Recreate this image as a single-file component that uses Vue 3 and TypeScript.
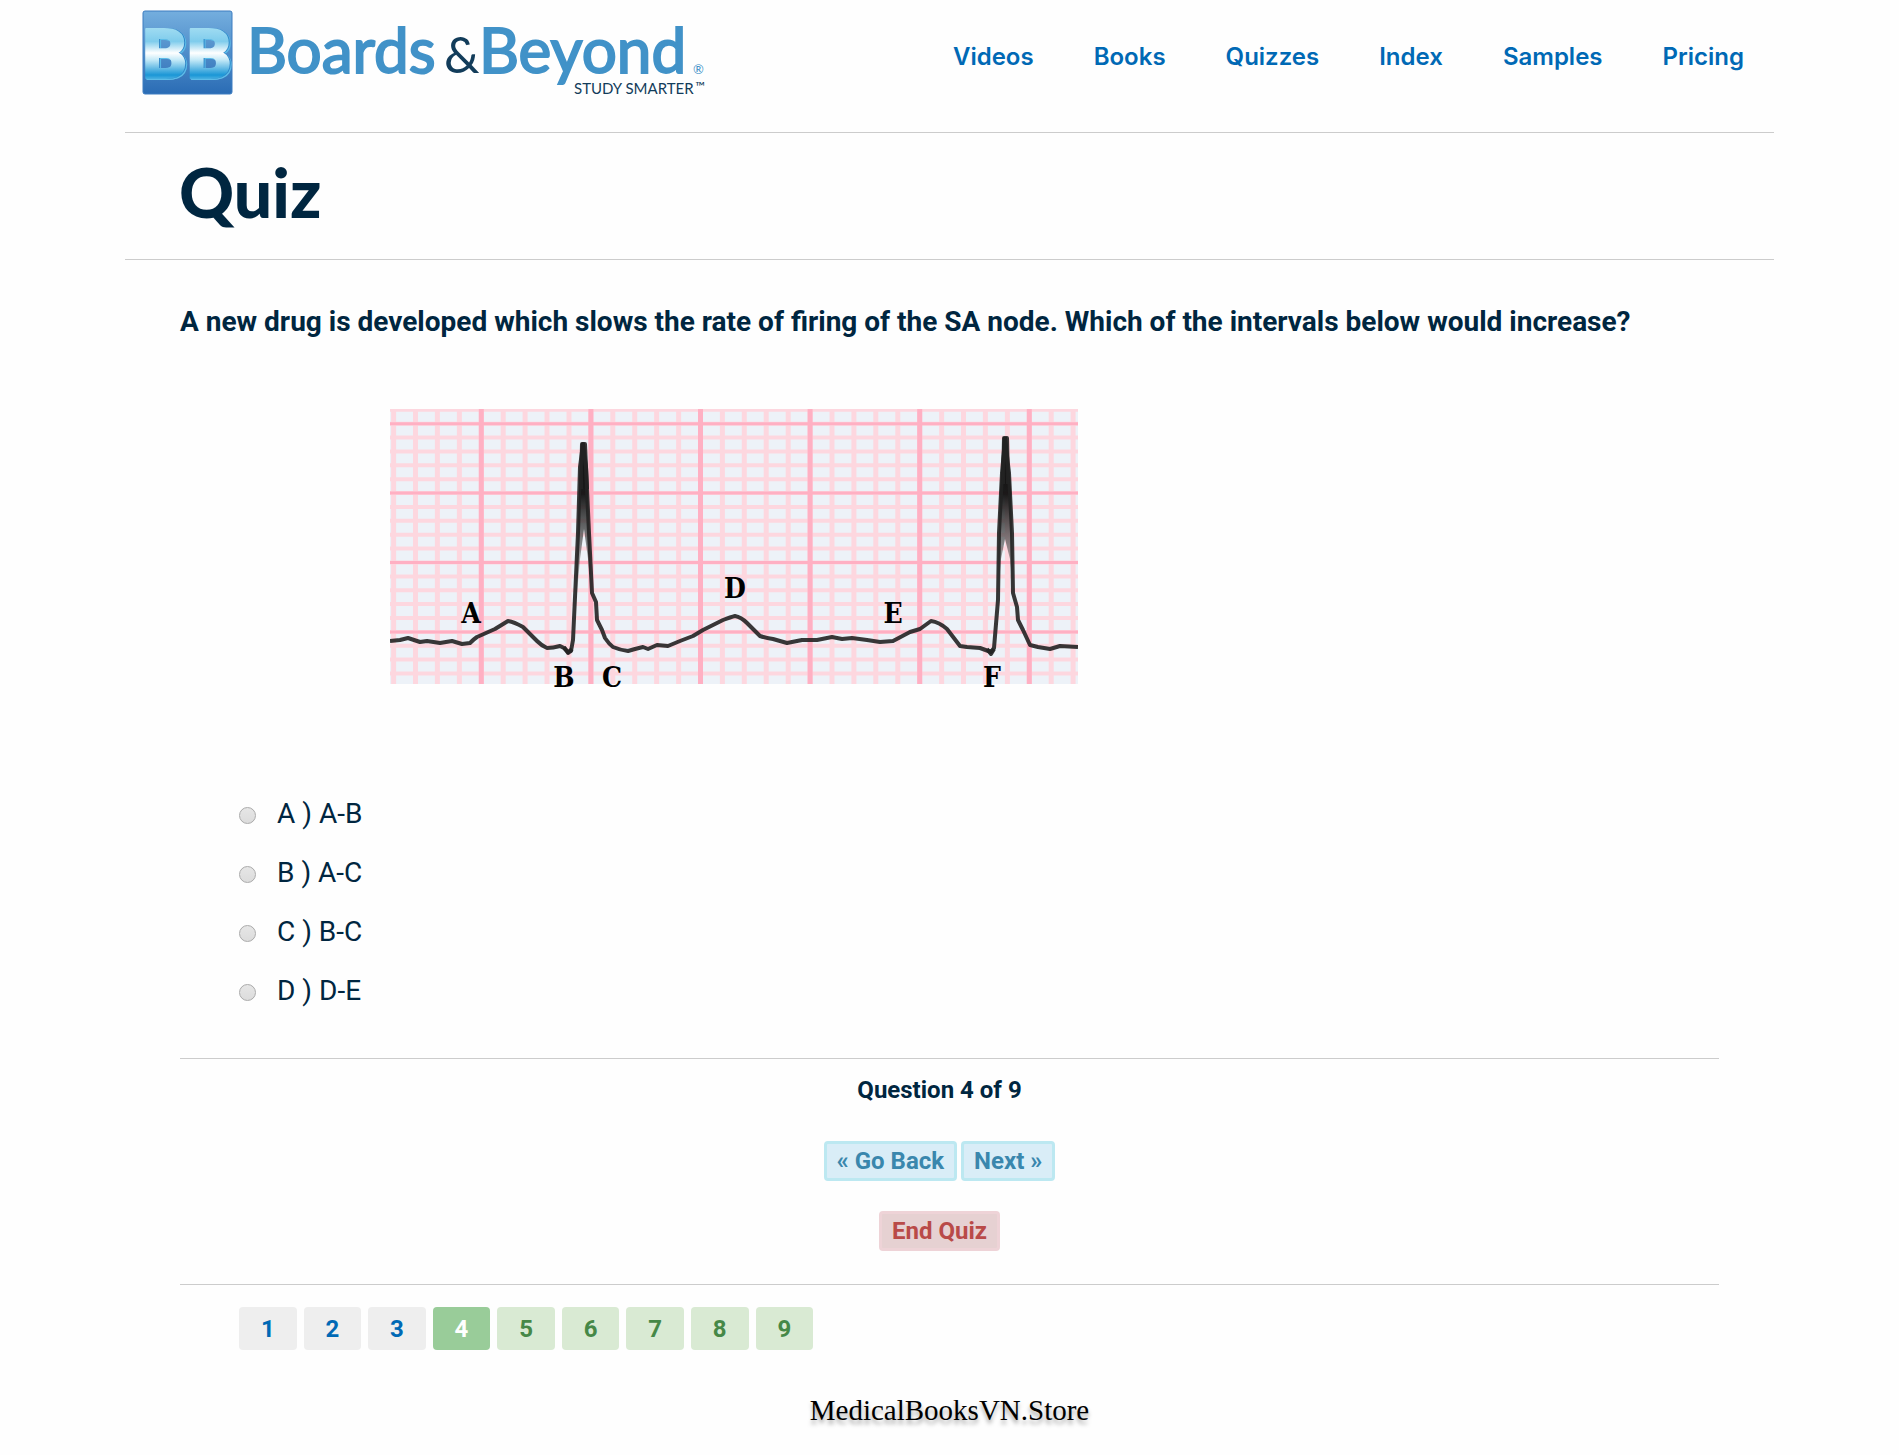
<script setup lang="ts">
import { ref } from 'vue'

interface Choice { key: string; text: string }
interface Mark { label: string; x: number; y: number }

const links: string[] = ['Videos', 'Books', 'Quizzes', 'Index', 'Samples', 'Pricing']

const choices: Choice[] = [
  { key: 'A', text: 'A-B' },
  { key: 'B', text: 'A-C' },
  { key: 'C', text: 'B-C' },
  { key: 'D', text: 'D-E' }
]

const total = 9
const current = ref(4)
const answer = ref('')

const pageState = (n: number): string =>
  n < current.value ? 'seen' : n === current.value ? 'current' : 'ahead'

// ECG paper: five small squares make a large one
const steps = (first: number, step: number, end: number): number[] => {
  const out: number[] = []
  for (let v = first; v < end; v += step) out.push(Math.round(v * 10) / 10)
  return out
}
const thinX = steps(3.6, 21.92, 688)
const thinY = steps(0.8, 13.88, 275)
const boldX = steps(91.3, 109.6, 688)
const boldY = steps(14.7, 69.4, 275)

const trace =
  'M0 232L10 231L18 229L30 233L37 232L50 234L62 232L72 235L80 234Q84 230 87 228L105 220L118 212Q124 213 133 218L147 232' +
  'Q152 237 157 239Q163 239 170 237L174 239L178 243L181 242L183 231L188 124L190 58L193 35L196 58L199 124L202 184L206 193' +
  'L207 211L212 221L215 229Q219 235 223 238Q230 241 238 242L245 240L253 238L258 240L267 236L278 237L290 232L303 227' +
  'L313 221L333 211Q341 208 345 207Q351 208 357 214L370 227Q376 229 383 230L397 234L412 231L427 231L442 228L452 230L462 229' +
  'L477 231L490 233L503 232L520 223L530 220L541 212Q549 213 557 220L570 237L577 238L590 239L601 243L604 239' +
  'L608 191L609 124L612 64L615 30L619 64L622 124L623 184L627 198L628 211L633 221L640 236L648 238' +
  'L660 240L670 237L688 238'

const marks: Mark[] = [
  { label: 'A', x: 81, y: 214 },
  { label: 'B', x: 174, y: 278 },
  { label: 'C', x: 222, y: 278 },
  { label: 'D', x: 345, y: 189 },
  { label: 'E', x: 503, y: 214 },
  { label: 'F', x: 602, y: 278 }
]
</script>

<template>
  <div class="page">
    <header class="top">
      <a class="brand" href="#" aria-label="Boards &amp; Beyond">
        <svg width="570" height="94" viewBox="0 0 570 94">
          <defs>
            <linearGradient id="tile" x1="0" y1="0" x2="0" y2="1">
              <stop offset="0" stop-color="#74aede" />
              <stop offset="1" stop-color="#2a6cb5" />
            </linearGradient>
            <linearGradient id="letter" gradientUnits="userSpaceOnUse" x1="0" y1="14" x2="0" y2="72">
              <stop offset="0" stop-color="#a9e0f3" />
              <stop offset="0.3" stop-color="#7fccec" />
              <stop offset="0.5" stop-color="#ffffff" />
              <stop offset="0.62" stop-color="#c3e9f7" />
              <stop offset="0.88" stop-color="#1a96d6" />
              <stop offset="1" stop-color="#6cc4ea" />
            </linearGradient>
          </defs>
          <rect x="2" y="1" width="89" height="83" rx="2" fill="url(#tile)" stroke="#3c7cc0" />
          <text class="mono" x="46" y="68" fill="url(#letter)" stroke="url(#letter)">BB</text>
          <g class="word">
            <text x="106" y="63">Boards</text>
            <text class="amp" x="303" y="63">&amp;</text>
            <text x="338" y="63">Beyond</text>
          </g>
          <text class="reg" x="552" y="64">®</text>
          <text class="tag" x="433" y="84">STUDY SMARTER</text>
          <text class="tm" x="554" y="81">™</text>
        </svg>
      </a>
      <nav class="links">
        <a v-for="l in links" :key="l" href="#">{{ l }}</a>
      </nav>
    </header>

    <h1 class="title">Quiz</h1>

    <main class="content">
      <h2 class="question" id="question">
        A new drug is developed which slows the rate of firing of the SA node. Which of the intervals below would increase?
      </h2>

      <svg class="ecg" width="688" height="285" viewBox="0 0 688 285" role="img" aria-label="ECG">
        <defs>
          <linearGradient id="spike" x1="0" y1="0" x2="0" y2="1">
            <stop offset="0" stop-color="#000" />
            <stop offset="0.3" stop-color="#111" stop-opacity="0.95" />
            <stop offset="0.6" stop-color="#555" stop-opacity="0.6" />
            <stop offset="1" stop-color="#888" stop-opacity="0" />
          </linearGradient>
        </defs>
        <rect width="688" height="275" fill="#edf2f8" />
        <g stroke="#fdd7df">
          <line v-for="x in thinX" :key="'a' + x" :x1="x" y1="0" :x2="x" y2="275" stroke-width="5" />
          <line v-for="y in thinY" :key="'b' + y" x1="0" :y1="y" x2="688" :y2="y" stroke-width="4" />
        </g>
        <g stroke="#ffb0c3">
          <line v-for="x in boldX" :key="'c' + x" :x1="x" y1="0" :x2="x" y2="275" stroke-width="5" />
          <line v-for="y in boldY" :key="'d' + y" x1="0" :y1="y" x2="688" :y2="y" stroke-width="3" />
        </g>
        <path d="M184 220L189 80L191 34H195L198 80L202 190L198 150L194 120L190 150ZM606 210L610 80L613 28H617L621 80L624 190L620 150L615 130L611 150Z" fill="url(#spike)" />
        <path class="trace" :d="trace" />
        <path class="trace" d="M191 80L192 35H195L197 80M613 75L614 29H617L618 75M174 238L178 244L182 240M597 240L601 245L604 240" />
        <text v-for="m in marks" :key="m.label" class="mark" :x="m.x" :y="m.y">{{ m.label }}</text>
      </svg>

      <div class="choices" role="radiogroup" aria-labelledby="question">
        <label v-for="c in choices" :key="c.key" class="choice">
          <input v-model="answer" type="radio" name="answer" :value="c.key">
          <span>{{ c.key }} ) {{ c.text }}</span>
        </label>
      </div>

      <section class="controls">
        <p class="progress">Question {{ current }} of {{ total }}</p>
        <div class="steps">
          <button type="button" class="btn info">« Go Back</button>
          <button type="button" class="btn info">Next »</button>
        </div>
        <button type="button" class="btn danger">End Quiz</button>
      </section>

      <nav class="pager" aria-label="Questions">
        <button v-for="n in total" :key="n" type="button" :class="pageState(n)">{{ n }}</button>
      </nav>
    </main>

    <footer class="store">MedicalBooksVN.Store</footer>
  </div>
</template>

<style>
body {
  background: #fefefe;
}
</style>

<style scoped>
.page {
  padding: 0 125px 27px;
  color: #002640;
  font-family: Roboto, "Liberation Sans", sans-serif;
}

.top {
  display: flex;
  align-items: center;
  justify-content: space-between;
  padding: 10px 30px 28px 16px;
  border-bottom: 1px solid #ccc;
}

.brand svg {
  display: block;
}

.mono {
  font: 900 69px Roboto, sans-serif;
  stroke-width: 2px;
  stroke-linejoin: round;
  text-anchor: middle;
  filter: drop-shadow(1px 0 0 #2f86c8) drop-shadow(1px 1px 0 #5cbce8);
}

.word {
  font: 400 62px Lato, sans-serif;
  fill: #4192c8;
  stroke: #4192c8;
  stroke-width: 2px;
}

.word .amp {
  font-size: 50px;
  fill: #123c5a;
  stroke: none;
}

.reg {
  font: 400 13px Lato, sans-serif;
  fill: #4192c8;
}

.tag {
  font: 400 15px Lato, sans-serif;
  fill: #123c5a;
}

.tm {
  font: 400 13px Lato, sans-serif;
  fill: #123c5a;
}

.links {
  display: flex;
  gap: 60px;
}

.links a {
  color: #0069b5;
  font: 600 24px/30px Inter, sans-serif;
  text-decoration: none;
}

.title {
  margin: 0;
  padding: 19px 54px 27px;
  border-bottom: 1px solid #ccc;
  font: 900 68px/80px Lato, sans-serif;
}

.content {
  padding: 44px 55px 0;
}

.question {
  margin: 0;
  font-size: 28px;
  font-weight: 700;
  line-height: 36px;
}

.ecg {
  display: block;
  margin: 69px 0 90px 210px;
}

.trace {
  fill: none;
  stroke: #222;
  stroke-width: 4px;
  stroke-linejoin: round;
  stroke-opacity: 0.9;
}

.mark {
  font: 700 28px "DejaVu Serif Condensed", "DejaVu Serif", serif;
  fill: #000;
  text-anchor: middle;
}

.choices {
  display: flex;
  flex-direction: column;
  align-items: flex-start;
  padding: 0 0 38px 59px;
}

.choice {
  display: flex;
  align-items: center;
  gap: 21px;
  height: 59px;
  font-size: 28px;
  line-height: 36px;
}

.choice input {
  appearance: none;
  width: 17px;
  height: 17px;
  margin: 3px 0 0;
  border: 1px solid #aaa;
  border-radius: 50%;
  background: linear-gradient(#e6e6e6, #dcdcdc);
}

.choice input:checked {
  background: radial-gradient(circle, #444 0 4px, #dcdcdc 5px);
}

.controls {
  display: flex;
  flex-direction: column;
  align-items: center;
  padding: 16px 20px 33px 0;
  border-top: 1px solid #ccc;
  border-bottom: 1px solid #ccc;
}

.progress {
  margin: 0 0 36px;
  font-size: 24px;
  font-weight: 700;
  line-height: 30px;
}

.steps {
  display: flex;
  gap: 4px;
  margin-bottom: 30px;
}

.btn {
  height: 40px;
  padding: 0 10px;
  border: 3px solid;
  border-radius: 4px;
  font: 700 24px/30px Roboto, sans-serif;
}

.info {
  color: #3a87ad;
  background: #d9edf7;
  border-color: #bce8f1;
}

.danger {
  color: #b94a48;
  background: #e6d1d2;
  border-color: #eed3d7;
}

.pager {
  display: flex;
  gap: 7px;
  width: 574px;
  margin: 22px 0 0 59px;
}

.pager button {
  flex: 1;
  height: 43px;
  padding: 0;
  border: 0;
  border-radius: 4px;
  font: 700 24px/30px Roboto, sans-serif;
}

.pager .seen {
  color: #0069b5;
  background: #eee;
}

.pager .current {
  color: #fff;
  background: #99cc99;
}

.pager .ahead {
  color: #468847;
  background: #d9ead3;
}

.store {
  margin-top: 42px;
  color: #000;
  font: 29px/36px "Liberation Serif", serif;
  text-align: center;
  text-shadow: 0 4px 4px rgba(0, 0, 0, 0.35);
}
</style>
